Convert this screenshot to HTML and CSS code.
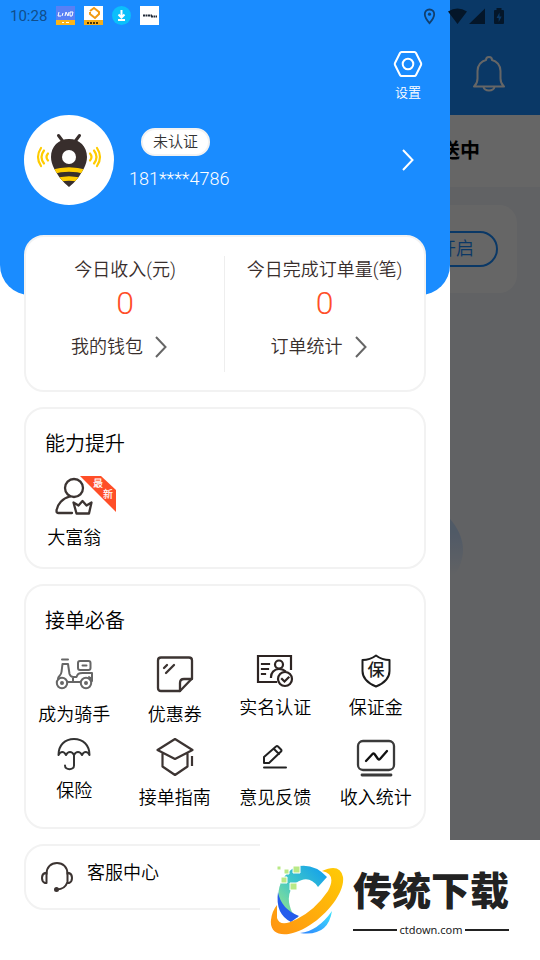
FILE: index.html
```
<!DOCTYPE html>
<html lang="zh-CN">
<head>
    <meta charset="UTF-8">
    <meta name="viewport" content="width=device-width, initial-scale=1.0">
    <title>个人中心</title>
    <link rel="stylesheet" href="styles.css">
</head>
<body>
    <!-- Order page behind the drawer -->
    <div class="home">
        <header class="home-header">
            <button class="bell" aria-label="消息">
                <svg width="34" height="38" viewBox="0 0 34 38" fill="none" stroke="#fff" stroke-width="2" stroke-linejoin="round">
                    <path d="M2 31.500c2-2 3.500-3 3.500-8V16c0-6 4-10 8.500-11 0-4 6-4 6 0 4.500 1 8.500 5 8.500 11v7.500c0 5 1.500 6 3.500 8z"/>
                    <path d="M11.500 32c1 4.500 10 4.500 11 0"/>
                </svg>
            </button>
        </header>
        <div class="home-tabs">
            <a href="#">送中</a>
        </div>
        <div class="home-card">
            <button class="open-btn">开启</button>
        </div>
        <div class="home-empty"></div>
    </div>
    <div class="mask"></div>

    <!-- Side drawer -->
    <main class="drawer">
        <header class="drawer-header">
            <button class="settings">
                <svg width="30" height="28" viewBox="0 0 30 28" fill="none" stroke="#fff" stroke-width="2" stroke-linejoin="round">
                    <path d="M8.500 2h13q1 0 1.500 1l5 10q.5 1 0 2l-5 10q-.5 1-1.500 1h-13q-1 0-1.500-1L2 15q-.5-1 0-2L7 3q.5-1 1.500-1z"/>
                    <circle cx="15" cy="14" r="5.300"/>
                </svg>
                <span>设置</span>
            </button>
            <a class="profile" href="#">
                <svg class="avatar" width="90" height="90" viewBox="0 0 90 90">
                    <defs>
                        <clipPath id="bee"><path d="M45 24c-10.500 0-18 7.500-18 18 0 8 5 15 9 21q4 5 9 9 5-4 9-9c4-6 9-13 9-21 0-10.500-7.500-18-18-18z"/></clipPath>
                    </defs>
                    <circle cx="45" cy="45" r="45" fill="#fff"/>
                    <path d="M34.500 20.500l4.500 6M55.500 20.500l-4.500 6" stroke="#382e2c" stroke-width="3" stroke-linecap="round"/>
                    <g clip-path="url(#bee)">
                        <path d="M27 24h36v48H27z" fill="#382e2c"/>
                        <path d="M28 57q17-5 34 0M30 66q15-5 30 0" fill="none" stroke="#fc0" stroke-width="4.500"/>
                    </g>
                    <circle cx="45" cy="42" r="7" fill="#fff"/>
                    <g fill="none" stroke="#fc0" stroke-width="2.200" stroke-linecap="round">
                        <path d="M24 38.500q-3 3.500 0 7M20 35.500q-5 6.500 0 13M17 33q-6 9 0 18M66 38.500q3 3.500 0 7M70 35.500q5 6.500 0 13M73 33q6 9 0 18"/>
                    </g>
                </svg>
                <span class="profile-info">
                    <span class="verify">未认证</span>
                    <span class="phone">181****4786</span>
                </span>
                <svg width="12" height="22" viewBox="0 0 12 22" fill="none" stroke="#fff" stroke-width="2"><path d="M1 1l9.500 10L1 21"/></svg>
            </a>
        </header>

        <div class="cards">
            <section class="card stats">
                <div class="stat">
                    <p class="stat-name">今日收入(元)</p>
                    <p class="stat-num">0</p>
                    <a class="stat-link" href="#">我的钱包
                        <svg width="12" height="22" viewBox="0 0 12 22" fill="none" stroke="#666" stroke-width="2"><path d="M1 1l9.500 10L1 21"/></svg>
                    </a>
                </div>
                <div class="stat">
                    <p class="stat-name">今日完成订单量(笔)</p>
                    <p class="stat-num">0</p>
                    <a class="stat-link" href="#">订单统计
                        <svg width="12" height="22" viewBox="0 0 12 22" fill="none" stroke="#666" stroke-width="2"><path d="M1 1l9.500 10L1 21"/></svg>
                    </a>
                </div>
            </section>

            <section class="card">
                <h2>能力提升</h2>
                <div class="grid">
                    <a class="item" href="#">
                        <span class="icon">
                            <svg width="42" height="42" viewBox="0 0 42 42" fill="none" stroke="#3c3432" stroke-width="2.300" stroke-linecap="round" stroke-linejoin="round">
                                <circle cx="21" cy="12" r="9"/>
                                <path d="M17 20.500C10 22 4 28 3.500 35q0 2 2 2H19"/>
                                <path d="M20.500 26.500l5 3 4-4.500 4 4.500 5-3L36 37.500H23.500z"/>
                            </svg>
                            <svg class="ribbon" width="36" height="36" viewBox="0 0 36 36">
                                <path d="M0 0h21l15 14v22z" fill="#ff4e28"/>
                                <text x="13" y="11">最</text>
                                <text x="23" y="22">新</text>
                            </svg>
                        </span>
                        <span>大富翁</span>
                    </a>
                </div>
            </section>

            <section class="card">
                <h2>接单必备</h2>
                <div class="grid">
                    <a class="item" href="#">
                        <span class="icon">
                            <svg width="42" height="42" viewBox="0 0 42 42" fill="none" stroke="#666" stroke-width="2" stroke-linecap="round" stroke-linejoin="round">
                                <circle cx="9" cy="30" r="5.200"/><circle cx="33" cy="30" r="5.200"/>
                                <circle cx="9" cy="30" r="1" fill="#666"/><circle cx="33" cy="30" r="1" fill="#666"/>
                                <path d="M9 6.500h6M5 26c0-3 3-3 3.500-7L9.500 11h5.500l1.500 10q1 3 4 3h3c1-3 2-4 6-4h9.500v8M14.500 29H27M20 24v5M36 24l3 2"/>
                                <rect x="25" y="8" width="12.500" height="9" rx="2"/><path d="M29.500 12.500h4"/>
                            </svg>
                        </span>
                        <span>成为骑手</span>
                    </a>
                    <a class="item" href="#">
                        <span class="icon">
                            <svg width="42" height="42" viewBox="0 0 42 42" fill="none" stroke="#3c3432" stroke-width="2.300" stroke-linecap="round" stroke-linejoin="round">
                                <path d="M7 4.500h28q3 0 3 3v18L26 38H7q-3 0-3-3V7.500q0-3 3-3z"/>
                                <path d="M26 38v-8q0-4 4-4h8M10 15l3-3M12 20l8-8"/>
                            </svg>
                        </span>
                        <span>优惠券</span>
                    </a>
                    <a class="item" href="#">
                        <span class="icon small">
                            <svg width="38" height="35" viewBox="0 0 38 35" fill="none" stroke="#2d2422" stroke-width="2.200" stroke-linecap="square">
                                <path d="M20 29H2V3h33v13M6 11h7M6 16h6M6 21h3"/>
                                <circle cx="23" cy="11.500" r="4"/>
                                <path d="M15 24c0-4 3-8 8-8q4 0 6 2"/>
                                <circle cx="29" cy="26" r="7"/><path d="M26 26l2.500 2.500 4-4"/>
                            </svg>
                        </span>
                        <span>实名认证</span>
                    </a>
                    <a class="item" href="#">
                        <span class="icon small">
                            <svg width="32" height="35" viewBox="0 0 32 35" fill="none" stroke="#1c1c1c" stroke-width="2" stroke-linejoin="round">
                                <path d="M16 2.500Q22 7 29.500 7v11q0 10-13.500 15.500Q2.500 28 2.500 18V7Q10 7 16 2.500z"/>
                                <text class="shield-text" x="16" y="23">保</text>
                            </svg>
                        </span>
                        <span>保证金</span>
                    </a>
                    <a class="item" href="#">
                        <span class="icon small">
                            <svg width="36" height="35" viewBox="0 0 36 35" fill="none" stroke="#333" stroke-width="2" stroke-linecap="round" stroke-linejoin="round">
                                <path d="M2.500 19C2.500 9 9 3 18 3s15.500 6 15.500 16q-1.500-3-3.800-3T26 19q-1.500-3-4-3t-4 3q-1.500-3-4-3t-4 3q-1.500-3-3.700-3T2.500 19z"/>
                                <path d="M18 19v10.500c0 5-9 5-9 0"/>
                            </svg>
                        </span>
                        <span>保险</span>
                    </a>
                    <a class="item" href="#">
                        <span class="icon">
                            <svg width="42" height="42" viewBox="0 0 42 42" fill="none" stroke="#3c3432" stroke-width="2.200" stroke-linejoin="round">
                                <path d="M21 3l17.500 11L21 23 3.500 14zM8.500 17v13.500L21 39l12.500-8.500V17"/>
                                <path d="M38 20v10"/>
                            </svg>
                        </span>
                        <span>接单指南</span>
                    </a>
                    <a class="item" href="#">
                        <span class="icon">
                            <svg width="42" height="42" viewBox="0 0 42 42" fill="none" stroke="#222" stroke-width="2" stroke-linecap="round" stroke-linejoin="round">
                                <path d="M10 27v-6L22 10.500q1-1 2 0l3 3q1 1 0 2L15 27zM20 13l5 5M10 31.500h22"/>
                            </svg>
                        </span>
                        <span>意见反馈</span>
                    </a>
                    <a class="item" href="#">
                        <span class="icon">
                            <svg width="42" height="42" viewBox="0 0 42 42" fill="none" stroke="#3a3a3a" stroke-width="2.300" stroke-linecap="round" stroke-linejoin="round">
                                <rect x="3" y="5" width="36" height="29" rx="5"/>
                                <path d="M7 39h29" stroke-width="2.800"/>
                                <path d="M11 25l6.500-7q1-1 2 0l3.500 5q1 1 2 0L32 15" stroke="#111"/>
                            </svg>
                        </span>
                        <span>收入统计</span>
                    </a>
                </div>
            </section>

            <a class="card service" href="#">
                <svg width="34" height="34" viewBox="0 0 34 34" fill="none" stroke="#3c3432" stroke-width="2" stroke-linecap="round" stroke-linejoin="round">
                    <path d="M6.500 14C6.500 7 11 3 17 3s10.500 4 10.500 11"/>
                    <path d="M6.500 13v10H5q-3-1-3-5t3-5zM27.500 13v10H29q3-1 3-5t-3-5z"/>
                    <path d="M27 23q-2 6-10 6.500"/><circle cx="16.500" cy="29.500" r="1.500" fill="#3c3432"/>
                </svg>
                <span>客服中心</span>
            </a>
        </div>
    </main>

    <!-- System status bar -->
    <div class="status">
        <span class="time">10:28</span>
        <svg width="19" height="19" viewBox="0 0 19 19">
            <path d="M0 0h19v14H0z" fill="#5880f5"/><path d="M0 14h19v5H0z" fill="#fdb515"/>
            <path d="M3 6L2 10h3M7 7l-1 3M9 10l1-4 2 4 1-4M14 6h3l-1 4h-2z" fill="none" stroke="#fff"/>
            <path d="M6 16.500h2M10 16.500h3" stroke="#fff"/>
        </svg>
        <svg width="19" height="19" viewBox="0 0 19 19">
            <path d="M0 0h19v19H0z" fill="#fff"/><path d="M0 14h19v5H0z" fill="#f5ae18"/>
            <path d="M6 5l4-3 5 4v2l-4 4-5-4V6" fill="none" stroke="#f29a13" stroke-width="2"/>
            <path d="M3 17h12" stroke="#4b3508" stroke-width="2" stroke-dasharray="2 1"/>
        </svg>
        <svg width="19" height="19" viewBox="0 0 19 19">
            <circle cx="9.500" cy="9.500" r="9.500" fill="#0bbffb"/>
            <path d="M9.500 4v7M6.500 8.500l3 3 3-3M6 14h7" fill="none" stroke="#fff" stroke-width="2"/>
        </svg>
        <svg width="19" height="19" viewBox="0 0 19 19">
            <path d="M0 0h19v19H0z" fill="#fff"/>
            <path d="M3 9.500h9M11 10.500h6" stroke="#222b38" stroke-width="2" stroke-dasharray="2 .5"/>
        </svg>
        <svg class="status-icons" width="82" height="18" viewBox="0 0 82 18">
            <path d="M6.500 2.500c-3 0-4.700 2.200-4.700 4.700 0 3.400 4.700 9 4.700 9s4.700-5.600 4.700-9c0-2.500-1.700-4.700-4.700-4.700z" fill="none" stroke="#123f6d" stroke-width="1.800"/>
            <circle cx="6.500" cy="7.200" r="1.600" fill="#123f6d"/>
            <g fill="#041629">
                <path d="M25 4.500q9.500-6 19 0L34.500 17zM62 1.500V17H46z"/>
                <path d="M73.500 1h5v2H80q1 0 1 1v12q0 1-1 1h-8q-1 0-1-1V4q0-1 1-1h1.500z"/>
            </g>
            <path d="M76.500 5.500L73.500 11h2.200v4l3-5.500h-2.200z" fill="#0a3866"/>
        </svg>
    </div>

    <!-- Site banner -->
    <aside class="banner">
        <svg width="76" height="72" viewBox="0 0 76 72">
            <defs>
                <linearGradient id="ring" x1="1" y1="0" x2="0" y2="1"><stop offset="0" stop-color="#ffcb05"/><stop offset="1" stop-color="#ff9312"/></linearGradient>
                <linearGradient id="arc" x1="1" y1="0" x2="0" y2="1"><stop offset="0" stop-color="#0d9bf2"/><stop offset=".5" stop-color="#3dc5c9"/><stop offset="1" stop-color="#9ee887"/></linearGradient>
                <linearGradient id="tail" x1="0" y1="1" x2="1" y2="0"><stop offset="0" stop-color="#2d83ff"/><stop offset="1" stop-color="#3fe4fc"/></linearGradient>
            </defs>
            <path d="M26 3q18-5 32 10l-9 10Q40 10 27 19q-12 11-4 29l6 6q-13 0-19-15Q6 16 26 3z" fill="url(#arc)"/>
            <path d="M9 28q3 17 21 24l-8 6Q6 50 9 28z" fill="#245cec"/>
            <path d="M53 7q18-8 21 6c2 14-14 36-33 48C18 76 0 72 2 56q1-9 6-15v13q3 10 20 1Q46 46 59 27 68 10 53 7z" fill="url(#ring)"/>
            <path d="M31 69q18-2 32-22-4 26-32 22z" fill="url(#tail)"/>
            <g fill="#b9e986" stroke="#fff" stroke-width="1">
                <path d="M24 2h7v7h-7zM15 5h5v5h-5zM8 2h4v4H8zM12 13h6v6h-6zM21 19h7v7h-7z"/>
            </g>
        </svg>
        <div class="banner-text">
            <strong>传统下载</strong>
            <span class="domain">ctdown.com</span>
        </div>
    </aside>
</body>
</html>
```
FILE: styles.css
```
* {
    box-sizing: border-box;
}

body {
    position: relative;
    margin: 0;
    min-height: 100vh;
    overflow: hidden;
    background: #f3f5fa;
    color: #000;
    font-family: Roboto, "Noto Sans CJK SC", sans-serif;
    font-size: 18px;
    font-weight: 350;
    line-height: 26px;
}

h2, p {
    margin: 0;
    font-weight: 350;
}

a {
    color: inherit;
    text-decoration: none;
}

button {
    padding: 0;
    border: none;
    background: none;
    color: inherit;
    font: inherit;
    cursor: pointer;
}

svg {
    display: block;
    flex: none;
}

/* Order page */
.home-header {
    display: flex;
    justify-content: flex-end;
    align-items: flex-end;
    height: 115px;
    padding: 22px 34px;
    background: #1a8cff;
}

.home-tabs {
    display: flex;
    justify-content: flex-end;
    align-items: center;
    height: 72px;
    padding: 0 60px;
    background: #fff;
    font-size: 20px;
    font-weight: 700;
}

.home-card {
    display: flex;
    justify-content: flex-end;
    align-items: center;
    height: 88px;
    margin: 18px 23px 0;
    padding: 0 19px;
    border-radius: 18px;
    background: #fff;
}

.open-btn {
    height: 36px;
    padding: 0 22px;
    border: 2px solid #1a8cff;
    border-radius: 18px;
    color: #1a8cff;
}

.home-empty {
    width: 386px;
    height: 172px;
    margin: 171px auto 0;
    border-radius: 50%;
    background: linear-gradient(#c9e0ff 40%, #f3f5fa 65%);
}

.mask {
    position: absolute;
    inset: 0;
    background: rgba(0, 0, 0, 0.6);
}

/* Drawer */
.drawer {
    position: absolute;
    top: 0;
    bottom: 0;
    left: 0;
    width: calc(100% - 90px);
    background: #fff;
}

.drawer-header {
    display: flex;
    flex-direction: column;
    height: 295px;
    padding: 50px 24px 0;
    border-radius: 0 0 30px 30px;
    background: #1a8cff;
    color: #fff;
}

.settings {
    display: flex;
    flex-direction: column;
    align-items: center;
    align-self: flex-end;
    gap: 2px;
    width: 36px;
    height: 52px;
    font-size: 13px;
}

.profile {
    display: flex;
    align-items: center;
    margin-top: 13px;
    padding-right: 12px;
}

.profile-info {
    display: flex;
    flex: 1;
    flex-direction: column;
    align-items: flex-start;
    gap: 10px;
    padding-left: 15px;
}

.verify {
    margin-left: 12px;
    padding: 0 10px;
    border: 2px solid #f2f2f2;
    border-radius: 14px;
    background: #fff;
    color: #333;
    font-size: 15px;
    line-height: 24px;
}

/* Cards */
.cards {
    display: flex;
    flex-direction: column;
    gap: 15px;
    margin: -60px 24px 0;
}

.card {
    padding: 22px 0 16px;
    border: 2px solid #f2f2f2;
    border-radius: 20px;
    background: #fff;
}

.card h2 {
    margin-bottom: 19px;
    padding-left: 19px;
    font-size: 20px;
}

.stats {
    display: grid;
    grid-template-columns: 1fr 1fr;
    padding: 19px 0 18px;
    color: #382e2c;
}

.stat {
    display: flex;
    flex-direction: column;
    align-items: center;
    padding-bottom: 12px;
}

.stat:first-child {
    border-right: 1px solid #eee;
}

.stat-name {
    line-height: 28px;
}

.stat-num {
    color: #ff4e28;
    font-size: 32px;
    line-height: 38px;
}

.stat-link {
    display: flex;
    align-items: center;
    gap: 12px;
    margin-top: 12px;
    padding-right: 12px;
}

/* Icon grid */
.grid {
    display: grid;
    grid-template-columns: repeat(4, 1fr);
    row-gap: 8px;
    margin: 0 -2px;
}

.item {
    display: flex;
    flex-direction: column;
    align-items: center;
    gap: 7px;
    white-space: nowrap;
}

.icon {
    display: flex;
    position: relative;
    align-items: center;
    height: 42px;
}

.icon.small {
    height: 35px;
}

.ribbon {
    position: absolute;
    top: 0;
    left: 27px;
}

.ribbon text {
    fill: #fff;
    font-size: 10px;
    font-weight: 500;
}

.shield-text {
    fill: #1c1c1c;
    stroke: none;
    font-size: 17px;
    font-weight: 500;
    text-anchor: middle;
}

.service {
    display: flex;
    align-items: flex-start;
    gap: 13px;
    height: 66px;
    padding: 14px;
}

/* Status bar */
.status {
    display: flex;
    position: absolute;
    top: 0;
    right: 0;
    left: 0;
    align-items: center;
    gap: 9px;
    height: 31px;
    padding: 0 35px 0 10px;
}

.time {
    color: #104e8c;
    font-size: 15px;
    font-weight: 400;
}

.status-icons {
    margin-left: auto;
}

/* Banner */
.banner {
    display: flex;
    position: absolute;
    right: 0;
    bottom: 0;
    align-items: center;
    gap: 8px;
    width: 280px;
    height: 120px;
    padding-left: 9px;
    background: #fff;
    color: #222;
}

.banner-text {
    padding-top: 8px;
}

.banner strong {
    display: block;
    font-size: 39px;
    font-weight: 900;
    line-height: 52px;
    white-space: nowrap;
}

.domain {
    display: flex;
    align-items: center;
    gap: 2px;
    font-family: "Noto Sans", sans-serif;
    font-size: 11px;
    font-weight: 400;
    line-height: 24px;
}

.domain::before,
.domain::after {
    content: "";
    flex: 1;
    height: 2px;
    background: #222;
}
```
